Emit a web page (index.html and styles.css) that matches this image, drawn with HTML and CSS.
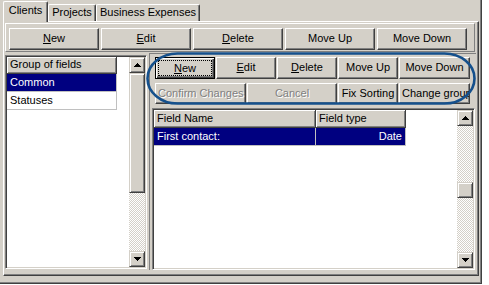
FILE: index.html
```html
<!DOCTYPE html>
<html>
	<head>
		<meta charset="utf-8">
		<title>Clients</title>
		<link rel="stylesheet" href="styles.css">
	</head>
	<body>
		<div class="win">
			<div class="tabs">
				<div class="tab active t-clients">Clients</div>
				<div class="tab t-projects">Projects</div>
				<div class="tab t-business">Business Expenses</div>
			</div>
			<div class="page">
				<div class="toolbar">
					<div class="btn"><u>N</u>ew</div>
					<div class="btn"><u>E</u>dit</div>
					<div class="btn"><u>D</u>elete</div>
					<div class="btn">Move Up</div>
					<div class="btn">Move Down</div>
				</div>
				<div class="main">
					<div class="groups sunken">
						<div class="list">
							<div class="cell head">Group of fields</div>
							<div class="cell sel">Common</div>
							<div class="cell">Statuses</div>
						</div>
						<div class="vscroll">
							<div class="sb-btn"><svg width="7" height="4" viewBox="0 0 7 4"><path d="M3 0h1v1h1v1h1v1h1v1H0V3h1V2h1V1h1z"/></svg></div>
							<div class="sb-thumb left-thumb"></div>
							<div class="sb-track"></div>
							<div class="sb-btn"><svg width="7" height="4" viewBox="0 0 7 4"><path d="M0 0h7v1H6v1H5v1H4v1H3V3H2V2H1V1H0z"/></svg></div>
						</div>
					</div>
					<div class="fields">
						<svg class="ring" width="331" height="54" viewBox="0 0 331 54"><rect x="1.5" y="1.5" width="327" height="50" rx="30" ry="25" fill="none" stroke="#15508c" stroke-width="2.6"/></svg>
						<div class="btnrow">
							<div class="btn focus w60"><span><u>N</u>ew</span></div>
							<div class="btn w60"><u>E</u>dit</div>
							<div class="btn w60"><u>D</u>elete</div>
							<div class="btn w60">Move Up</div>
							<div class="btn w71">Move Down</div>
						</div>
						<div class="btnrow second">
							<div class="btn off w91">Confirm Changes</div>
							<div class="btn off w90">Cancel</div>
							<div class="btn w60">Fix Sorting</div>
							<div class="btn w71 clip">Change group</div>
						</div>
						<div class="grid sunken">
							<div class="table">
								<div class="row">
									<div class="cell head c1">Field Name</div>
									<div class="cell head c2">Field type</div>
								</div>
								<div class="row">
									<div class="cell sel c1">First contact:</div>
									<div class="cell sel c2 right">Date</div>
								</div>
							</div>
							<div class="vscroll">
								<div class="sb-btn"><svg width="7" height="4" viewBox="0 0 7 4"><path d="M3 0h1v1h1v1h1v1h1v1H0V3h1V2h1V1h1z"/></svg></div>
								<div class="sb-track top-track"></div>
								<div class="sb-thumb"></div>
								<div class="sb-track"></div>
								<div class="sb-btn"><svg width="7" height="4" viewBox="0 0 7 4"><path d="M0 0h7v1H6v1H5v1H4v1H3V3H2V2H1V1H0z"/></svg></div>
							</div>
						</div>
					</div>
				</div>
			</div>
		</div>
	</body>
</html>
```

FILE: styles.css
```css
*{box-sizing:border-box;}
body{margin:0;background:#fff;font-family:"Liberation Sans",Arial,sans-serif;font-size:11px;color:#000;}
u{text-decoration:underline;}

.win{
	width:482px;
	height:284px;
	background:#d4d0c8;
	box-shadow:inset -1px -1px #404040,inset -2px -2px #808080;
}

/* tabs */
.tabs{
	display:flex;
	align-items:flex-end;
	height:21px;
	padding-left:3px;
}
.tab{
	height:17px;
	padding-top:1px;
	text-align:center;
	line-height:13px;
	border-top:1px solid #fff;
	border-left:1px solid #fff;
	border-right:1px solid #404040;
	box-shadow:inset -1px 0 #808080;
	border-radius:2px 2px 0 0;
	background:#d4d0c8;
	white-space:nowrap;
}
.tab.active{
	height:21px;
	padding-top:2px;
	margin-bottom:-1px;
	position:relative;
	z-index:1;
}
.t-clients{width:45px;}
.t-projects{width:48px;}
.t-business{width:104px;}

.page{
	margin-left:3px;
	width:476px;
	height:255px;
	border:1px solid;
	border-color:#fff #404040 #404040 #fff;
	box-shadow:inset -1px -1px #808080;
}

/* buttons */
.toolbar{
	display:flex;
	gap:2px;
	width:470px;
	height:29px;
	margin:1px 0 0 1px;
	padding:4px 0 0 3px;
	border:1px solid;
	border-color:#fff #808080 #808080 #fff;
}
.btn{
	height:22px;
	line-height:19px;
	text-align:center;
	white-space:nowrap;
	overflow:hidden;
	padding:0 2px;
	background:#d4d0c8;
	border:1px solid;
	border-color:#fff #404040 #404040 #fff;
	box-shadow:inset -1px -1px #808080;
}
.toolbar .btn{width:90px;line-height:18px;}
.btnrow{
	display:flex;
	gap:1px;
	padding-left:5px;
	margin-top:3px;
}
.btnrow.second{margin-top:4px;}
.btnrow.second .btn{height:21px;}
.w60{width:60px;}
.w71{width:71px;}
.w90{width:90px;}
.w91{width:91px;}
.btn.off{color:#808080;text-shadow:1px 1px #fff;}
.btn.clip{text-align:left;padding-left:2px;}
.btn.focus{
	border:1px solid #000;
	box-shadow:inset 1px 1px #fff,inset -1px -1px #404040,inset -2px -2px #808080;
	padding:2px;
	line-height:15px;
}
.btn.focus span{
	display:block;
	height:16px;
	border:1px dotted #000;
}

/* body */
.main{display:flex;gap:2px;}
.sunken{
	border:1px solid;
	border-color:#808080 #fff #fff #808080;
	box-shadow:inset 1px 1px #404040,inset -1px -1px #d4d0c8;
	padding:1px;
}
.groups{
	display:flex;
	width:142px;
	height:214px;
	margin:3px 0 0 1px;
}
.list{flex:1;background:#fff;}
.cell{
	width:110px;
	height:18px;
	line-height:17px;
	padding-left:3px;
	border-right:1px solid #c0c0c0;
	border-bottom:1px solid #c0c0c0;
	white-space:nowrap;
	overflow:hidden;
}
.cell.head{
	height:17px;
	line-height:15px;
	background:#d4d0c8;
	border-color:#404040;
	box-shadow:inset 1px 1px #fff,inset -1px -1px #808080;
}
.cell.sel{background:#000080;color:#fff;}

.vscroll{
	width:16px;
	display:flex;
	flex-direction:column;
}
.sb-btn,.sb-thumb{
	height:16px;
	background:#d4d0c8;
	border:1px solid;
	border-color:#d4d0c8 #404040 #404040 #d4d0c8;
	box-shadow:inset 1px 1px #fff,inset -1px -1px #808080;
}
.sb-btn{display:flex;align-items:center;justify-content:center;}
.sb-btn svg{display:block;shape-rendering:crispEdges;}
.left-thumb{height:120px;}
.sb-track{
	flex:1;
	background:repeating-conic-gradient(#d4d0c8 0 25%,#fff 0 50%) 0 0/2px 2px;
}
.top-track{flex:none;height:56px;}

.fields{
	position:relative;
	width:327px;
	height:217px;
	margin-top:1px;
	border-top:1px solid #808080;
	border-left:1px solid #808080;
}
.ring{
	position:absolute;
	left:-4px;
	top:-2px;
	z-index:2;
}
.grid{
	display:flex;
	width:323px;
	height:162px;
	margin:4px 0 0 2px;
}
.table{flex:1;background:#fff;}
.row{display:flex;}
.row .c1{width:162px;}
.row .c2{width:90px;}
.right{text-align:right;padding-right:3px;}
.row .cell.head{height:18px;line-height:16px;}
```
